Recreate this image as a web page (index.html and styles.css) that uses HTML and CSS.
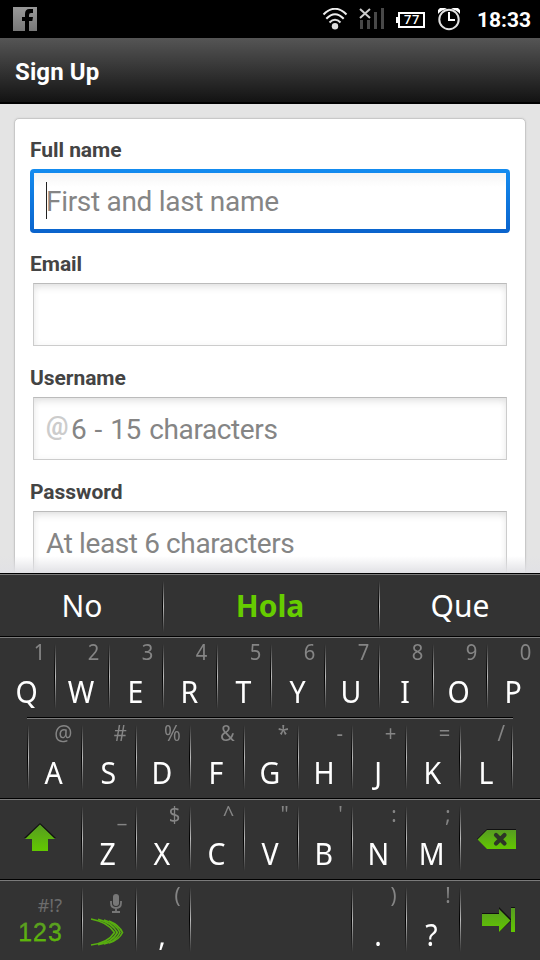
FILE: index.html
```html
<!DOCTYPE html>
<html lang="en">
<head>
<meta charset="utf-8">
<title>Sign Up</title>
<link rel="stylesheet" href="styles.css">
</head>
<body>
<div class="screen">
  <div class="statusbar">
    <svg class="fb" width="24" height="24" viewBox="0 0 24 24"><defs><linearGradient id="fg" x1="0" y1="0" x2="0" y2="1"><stop offset="0" stop-color="#999"/><stop offset="1" stop-color="#777"/></linearGradient></defs><path fill="url(#fg)" fill-rule="evenodd" d="M0 0H24V24H0ZM12 24H16V14H19.3L20 10H16V8.200Q16 6 18 6H20V2H16.500Q12 2 12 7V10H9V14H12Z"/></svg>
    <div class="tray">
      <svg width="26" height="24" viewBox="0 0 26 24" fill="none" stroke="#fff" stroke-width="2"><path d="M1.500 6.500Q13-5 24.500 6.500M4.300 10.800Q13 1.500 21.700 10.800" stroke="#eee"/><path d="M7.500 14.500Q13 9 18.500 14.500" stroke="#ddd"/><circle cx="13" cy="18.300" r="3.200" fill="#ddd" stroke="none"/></svg>
      <svg width="26" height="24" viewBox="0 0 26 24"><path fill="#484848" d="M1 12h3v9H1zM8 12h3v9H8zM15 4h3v17h-3zM22 0h3v21h-3z"/><path d="M1 1L11 10M11 1L1 10" stroke="#ccc" stroke-width="2"/></svg>
      <div class="battery">77</div>
      <svg width="24" height="24" viewBox="0 0 24 24" fill="none"><path d="M1 6V2L3 0H8L10 1Q4 2 1 6ZM23 6V2L21 0H16L14 1Q20 2 23 6Z" fill="#fff"/><circle cx="12" cy="11.500" r="9.700" stroke="#e2e2e2" stroke-width="2"/><path d="M12 4V12H18" stroke="#fff" stroke-width="2"/></svg>
      <span class="clock">18:33</span>
    </div>
  </div>
  <div class="header"><span>Sign Up</span></div>
  <div class="page">
    <div class="card">
      <div class="field"><div class="label">Full name</div><div class="input focused"><i class="caret"></i><span class="ph">First and last name</span></div></div>
      <div class="field"><div class="label">Email</div><div class="input"></div></div>
      <div class="field"><div class="label">Username</div><div class="input"><span class="at">@</span><span class="ph low range">6 - 15 characters</span></div></div>
      <div class="field"><div class="label">Password</div><div class="input"><span class="ph low">At least 6 characters</span></div></div>
    </div>
  </div>
  <div class="keyboard">
    <div class="row suggestions"><div class="sug">No</div><div class="sug best">Hola</div><div class="sug">Que</div></div>
    <div class="row">
      <div class="key"><small>1</small><b>Q</b></div><div class="key"><small>2</small><b>W</b></div><div class="key"><small>3</small><b>E</b></div><div class="key"><small>4</small><b>R</b></div><div class="key"><small>5</small><b>T</b></div><div class="key"><small>6</small><b>Y</b></div><div class="key"><small>7</small><b>U</b></div><div class="key"><small>8</small><b>I</b></div><div class="key"><small>9</small><b>O</b></div><div class="key"><small>0</small><b>P</b></div>
    </div>
    <div class="row inset">
      <div class="key"><small>@</small><b>A</b></div><div class="key"><small>#</small><b>S</b></div><div class="key"><small>%</small><b>D</b></div><div class="key"><small>&amp;</small><b>F</b></div><div class="key"><small>*</small><b>G</b></div><div class="key"><small>-</small><b>H</b></div><div class="key"><small>+</small><b>J</b></div><div class="key"><small>=</small><b>K</b></div><div class="key"><small>/</small><b>L</b></div>
    </div>
    <div class="row">
      <div class="key side"><svg width="81" height="81" viewBox="0 0 81 81"><defs><linearGradient id="g" x1="0" y1="0" x2="0" y2="1"><stop offset="0" stop-color="#579c22"/><stop offset="1" stop-color="#62c800"/></linearGradient></defs><path d="M40 25L24 40H32V52H48V40H56Z" fill="#111"/><path d="M40 26.500L25 41H32V53H48V41H55Z" fill="url(#g)"/></svg></div>
      <div class="key"><small>_</small><b>Z</b></div><div class="key"><small>$</small><b>X</b></div><div class="key"><small>^</small><b>C</b></div><div class="key"><small>"</small><b>V</b></div><div class="key"><small>'</small><b>B</b></div><div class="key"><small>:</small><b>N</b></div><div class="key"><small>;</small><b>M</b></div>
      <div class="key side"><svg width="81" height="81" viewBox="-2 0 81 81"><path d="M16 41L26 31H55V50H26Z" fill="#111"/><path d="M16.500 41.500L26 32H55V51H26Z" fill="url(#g)"/><path d="M35 37L43.500 45.500M43.500 37L35 45.500" stroke="#2d3627" stroke-width="4.200" stroke-linecap="round"/></svg></div>
    </div>
    <div class="row">
      <div class="key side num"><small>#!?</small><b>123</b></div>
      <div class="key voice"><svg width="54" height="81" viewBox="0 0 54 81"><rect x="32" y="15" width="6" height="12" rx="3" fill="#777"/><path d="M30 22V24Q30 29 35 29Q40 29 40 24V22M35 29V33M31 33H39" fill="none" stroke="#777" stroke-width="1.800"/><g fill="none" stroke="#58ae10" stroke-width="1.700"><path d="M10 40Q27 43 33.500 53.500Q27 64 10 66"/><path d="M17 40.300Q31 43.500 36.300 53.500Q31 63.500 17 65.700"/><path d="M23 41Q34.500 44 39 53.500Q34.500 63 23 65"/><path d="M28 42Q38 46 41.500 53.500Q38 61 28 64"/></g></svg></div>
      <div class="key"><small>(</small><b>,</b></div><div class="key space"></div><div class="key"><small>)</small><b>.</b></div><div class="key"><small>!</small><b>?</b></div>
      <div class="key side"><svg width="81" height="81" viewBox="-2 0 81 81"><path d="M21 34H38V28L50 40V28H54V52H50V42L38 53V46H21Z" fill="#111"/><path d="M21 35H38V30L49.500 41.500L38 53V47H21ZM50 29H54V53H50Z" fill="url(#g)"/></svg></div>
    </div>
  </div>
</div>
</body>
</html>
```
FILE: styles.css
```css
* { box-sizing: border-box; }
body { margin: 0; background: #e4e4e4; font-family: Roboto, sans-serif; }
.screen { width: 540px; height: 960px; display: flex; flex-direction: column; overflow: hidden; }
.statusbar { height: 38px; background: #000; display: flex; justify-content: space-between; padding: 7px 9px 0 13px; }
.tray { display: flex; align-items: flex-start; padding-top: 1px; }
.tray svg:first-child { margin-right: 11px; }
.battery { position: relative; width: 27px; height: 16px; margin: 4px 12px 0 13px; border: 2px solid #fff; color: #fff; font: 500 13px/12px Roboto, sans-serif; letter-spacing: .5px; text-align: center; padding-left: 1px; }
.battery::before { content: ""; position: absolute; left: -4px; top: 3px; width: 3px; height: 6px; background: #fff; }
.clock { width: 54px; margin-left: 16px; color: #fff; font: bold 21px/25px Roboto, sans-serif; white-space: nowrap; }
.header { height: 66px; background: linear-gradient(#555, #131313); border-bottom: 2px solid #000; padding-left: 15px; color: #fff; font-weight: bold; font-size: 24px; letter-spacing: .1px; line-height: 69px; }
.page { position: relative; height: 469px; padding: 14px 14px 0; overflow: hidden; }
.page::after { content: ""; position: absolute; left: 0; right: 0; bottom: 0; height: 17px; background: linear-gradient(rgba(228,228,232,0), #e1e1e5); }
.card { height: 500px; background: #fff; border: 1px solid #c8c8c8; border-radius: 5px; padding: 16px 15px; box-shadow: 0 0 2px #ccc; }
.field { height: 114px; }
.label { height: 34px; line-height: 30px; font-size: 21px; letter-spacing: -.05px; font-weight: bold; color: #444; white-space: nowrap; }
.input { position: relative; height: 63px; margin: 0 3px; border: 1px solid #ccc; border-top-color: #bbb; background: #fff; box-shadow: inset 0 5px 9px -3px #ddd, inset 0 0 7px #f4f4f4; display: flex; align-items: center; padding-left: 12px; }
.focused { height: 64px; margin: 0; border: 4px solid transparent; border-radius: 4px; background: linear-gradient(#f5f5f5, #fff 14px) padding-box, linear-gradient(#148cf0, #0a63cc) border-box; box-shadow: none; }
.caret { position: absolute; left: 12px; top: 9px; width: 1px; height: 37px; background: #222; }
.ph { padding-top: 1px; font-size: 28px; line-height: 36px; letter-spacing: -.3px; color: #858585; white-space: nowrap; }
.low { padding-top: 3px; letter-spacing: -.38px; }
.range { word-spacing: 1.7px; }
.at { width: 25px; padding-bottom: 3px; font-size: 25px; line-height: 32px; font-weight: 700; color: #ccc; }
.keyboard { height: 387px; background: #333; font-family: "Noto Sans", sans-serif; }
.row { position: relative; display: flex; height: 81px; }
.row::before { content: ""; position: absolute; left: 0; right: 0; top: 0; height: 2px; background: linear-gradient(#000 50%, #7b7b7b 50%); }
.row.suggestions { height: 63px; }
.inset { margin: 0 27px; }
.sug { width: 162px; position: relative; padding-left: 2px; text-align: center; color: #fff; font-size: 30px; line-height: 65px; }
.best { width: 216px; padding-left: 0; color: #6c0; font-weight: bold; }
.key { position: relative; width: 54px; display: flex; flex-direction: column; align-items: center; }
.key small { align-self: flex-end; margin: 1px 8.500px 0 0; height: 30px; font-size: 21.500px; line-height: 30px; color: #858585; transform: scaleX(.94); transform-origin: right; }
.key b { margin: 5px 0 0 0; height: 40px; font-weight: normal; font-size: 30px; line-height: 40px; color: #fff; transform: scaleX(.95); }
.side { width: 81px; }
.space { width: 162px; }
.key + .key::before, .sug + .sug::before, .inset .key:first-child::before, .inset .key:last-child::after { content: ""; position: absolute; left: 0; top: 8px; width: 2px; height: 65px; background: linear-gradient(90deg, #000 50%, #bbb 50%); -webkit-mask-image: linear-gradient(transparent, #000 50%, transparent); mask-image: linear-gradient(transparent, #000 50%, transparent); }
.sug + .sug::before { height: 51px; }
.inset .key:last-child::after { left: auto; right: 0; }
.num small { margin: 11px 19px 0 0; font-size: 18px; line-height: 30px; color: #6c6c6c; transform: none; }
.num b { margin: -4px 0 0; height: 32px; font: 25px/32px "Liberation Sans", sans-serif; letter-spacing: 1px; background: linear-gradient(#5a9c26 20%, #5ebc08 80%); -webkit-background-clip: text; background-clip: text; color: transparent; -webkit-text-stroke: .3px #5aaa14; transform: none; }
```
